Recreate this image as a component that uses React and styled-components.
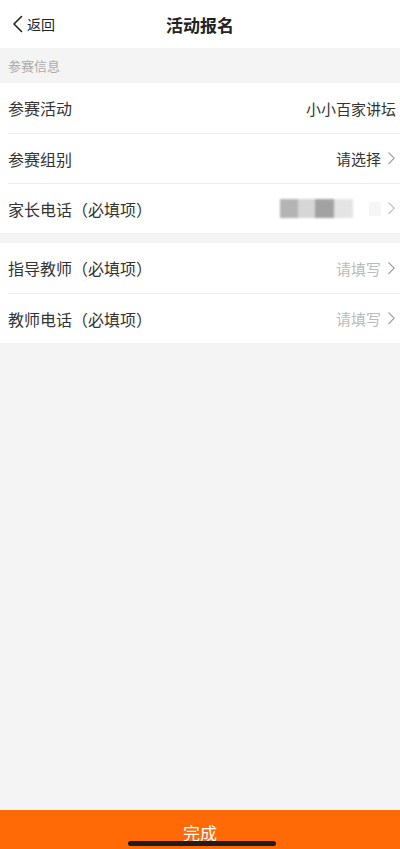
import styled, { createGlobalStyle } from "styled-components";

const GlobalStyle = createGlobalStyle`
  html, body {
    margin: 0;
    padding: 0;
    background: #f4f4f4;
  }
  body {
    font-family: "Noto Sans CJK SC", "Noto Sans", sans-serif;
    color: #333;
  }
`;

const Page = styled.div`
  width: 400px;
  height: 849px;
  display: flex;
  flex-direction: column;
  background: #f4f4f4;
  overflow: hidden;
`;

const NavBar = styled.header`
  height: 48px;
  background: #fff;
  display: grid;
  grid-template-columns: 1fr auto 1fr;
  align-items: center;
  padding: 0 12px;
  box-sizing: border-box;
`;

const Back = styled.div`
  display: flex;
  align-items: center;
  gap: 3px;
  font-size: 14px;
  color: #222;
`;

const Title = styled.h1`
  margin: 0;
  font-size: 17px;
  font-weight: 700;
  color: #222;
`;

const SectionLabel = styled.div`
  height: 35px;
  display: flex;
  align-items: center;
  padding-left: 8px;
  font-size: 13px;
  color: #aaa;
`;

const Group = styled.section`
  background: #fff;
  margin-bottom: ${(p) => p.$gap || 0}px;
`;

const Row = styled.div`
  height: 50px;
  margin-left: 8px;
  padding-right: 4px;
  display: flex;
  align-items: center;
  justify-content: space-between;
  border-top: ${(p) => (p.$first ? "none" : "1px solid #ececec")};
  box-sizing: border-box;
`;

const Label = styled.span`
  font-size: 16px;
  color: #333;
`;

const Value = styled.span`
  display: flex;
  align-items: center;
  gap: 6px;
  font-size: 15px;
  color: ${(p) => (p.$placeholder ? "#bbb" : "#333")};
`;

// the parent's number is shown pixelated
const Masked = styled.div`
  display: flex;
  align-items: center;
  margin-right: 10px;
  filter: blur(1px);
`;

const Cell = styled.span`
  width: ${(p) => p.$w}px;
  height: 19px;
  background: ${(p) => p.$c};
`;

const Faint = styled.span`
  width: 12px;
  height: 14px;
  background: #f6f6f6;
`;

const Spacer = styled.div`
  flex: 1;
`;

const Submit = styled.button`
  position: relative;
  height: 39px;
  border: none;
  background: #ff6a06;
  color: #fff;
  font-family: inherit;
  font-size: 17px;
  padding: 5px 0 0;
  display: flex;
  align-items: center;
  justify-content: center;
`;

const HomeBar = styled.span`
  position: absolute;
  left: 128px;
  bottom: 3px;
  width: 148px;
  height: 5px;
  border-radius: 3px;
  background: #1e1e1e;
`;

const Chevron = ({ size = 9, color = "#999", width = 1.3 }) => (
  <svg width={size} height={size * 1.6} viewBox="0 0 10 16" fill="none">
    <path d="M2 2l6 6-6 6" stroke={color} strokeWidth={width} strokeLinecap="round" strokeLinejoin="round" />
  </svg>
);

const BackArrow = () => (
  <svg width="12" height="18" viewBox="0 0 12 18" fill="none">
    <path d="M9.5 1.5L2 9l7.5 7.5" stroke="#222" strokeWidth="1.6" strokeLinecap="round" strokeLinejoin="round" />
  </svg>
);

const App = () => {
  return (
    <Page>
      <GlobalStyle />
      <NavBar>
        <Back>
          <BackArrow />
          返回
        </Back>
        <Title>活动报名</Title>
        <span />
      </NavBar>

      <SectionLabel>参赛信息</SectionLabel>
      <Group $gap={10}>
        <Row $first>
          <Label>参赛活动</Label>
          <Value>小小百家讲坛</Value>
        </Row>
        <Row>
          <Label>参赛组别</Label>
          <Value>
            请选择
            <Chevron />
          </Value>
        </Row>
        <Row>
          <Label>家长电话（必填项）</Label>
          <Value>
            <Masked>
              <Cell $w={18} $c="#b4b4b4" />
              <Cell $w={17} $c="#d6d6d6" />
              <Cell $w={19} $c="#a2a2a2" />
              <Cell $w={19} $c="#e4e4e4" />
            </Masked>
            <Faint />
            <Chevron color="#bbb" />
          </Value>
        </Row>
      </Group>

      <Group>
        <Row $first>
          <Label>指导教师（必填项）</Label>
          <Value $placeholder>
            请填写
            <Chevron />
          </Value>
        </Row>
        <Row>
          <Label>教师电话（必填项）</Label>
          <Value $placeholder>
            请填写
            <Chevron />
          </Value>
        </Row>
      </Group>

      <Spacer />

      <Submit>
        完成
        <HomeBar />
      </Submit>
    </Page>
  );
};

export default App;
